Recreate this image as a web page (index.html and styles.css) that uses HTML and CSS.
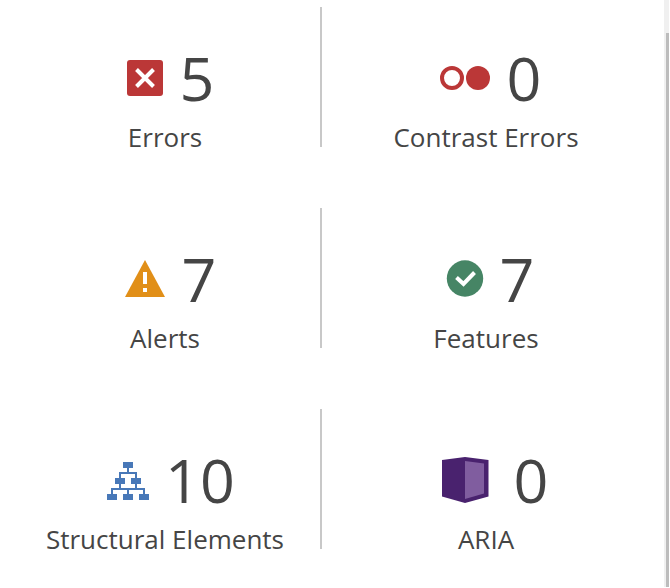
FILE: index.html
```html
<!DOCTYPE html>
<html lang="en">
<head>
<meta charset="utf-8">
<title>Summary</title>
<link rel="stylesheet" href="styles.css">
</head>
<body>
<main class="summary">
  <section class="item">
    <div class="count">
      <svg class="icon" width="60" height="50" viewBox="1 -1 60 50" aria-hidden="true"><rect x="12" y="6" width="36" height="36" rx="3" fill="#bb3737"/><path d="M21.500 15.500L38.500 32.500M38.500 15.500L21.500 32.500" stroke="#fff" stroke-width="4"/></svg>
      <span class="number">5</span>
    </div>
    <h2 class="label">Errors</h2>
  </section>
  <section class="item">
    <div class="count">
      <svg class="icon" width="72" height="50" viewBox="2 -1 72 50" aria-hidden="true"><circle cx="23" cy="24" r="10" fill="#fff" stroke="#bb3737" stroke-width="4"/><circle cx="49" cy="24" r="12" fill="#bb3737"/></svg>
      <span class="number">0</span>
    </div>
    <h2 class="label">Contrast Errors</h2>
  </section>
  <section class="item">
    <div class="count">
      <svg class="icon" width="64" height="50" viewBox="0 0 64 50" aria-hidden="true"><path d="M31 6L51 43H11Z" fill="#e18f18"/><path d="M29 18h4v12h-4zM29 34h4v4h-4z" fill="#fff"/></svg>
      <span class="number">7</span>
    </div>
    <h2 class="label">Alerts</h2>
  </section>
  <section class="item">
    <div class="count">
      <svg class="icon" width="58" height="50" viewBox="1 0 58 50" aria-hidden="true"><circle cx="28" cy="24.500" r="18.200" fill="#468565"/><path d="M19.500 23.500L26.500 30L37.500 18.500" fill="none" stroke="#fff" stroke-width="4"/></svg>
      <span class="number">7</span>
    </div>
    <h2 class="label">Features</h2>
  </section>
  <section class="item">
    <div class="count">
      <svg class="icon" width="66" height="50" viewBox="-2 -1 66 50" aria-hidden="true"><path fill="#4878b8" d="M26 6h10v6h-10zM18 22h10v6h-10zM34 22h10v6h-10zM10 38h10v6h-10zM26 38h10v6h-10zM42 38h10v6h-10z"/><path fill="none" stroke="#4878b8" stroke-width="2" d="M31 12v5M23 22v-5h16v5M23 28v5M39 28v5M15 38v-5h32v5M31 33v5"/></svg>
      <span class="number">10</span>
    </div>
    <h2 class="label">Structural Elements</h2>
  </section>
  <section class="item">
    <div class="count">
      <svg class="icon" width="86" height="50" viewBox="0 -1 86 50" aria-hidden="true"><path d="M18 4L41 1L64.500 4V40.500L41 47L18 40.500Z" fill="#49226e"/><path d="M41 5L60 7.500V37.500L41 43Z" fill="#805d9f"/></svg>
      <span class="number">0</span>
    </div>
    <h2 class="label">ARIA</h2>
  </section>
</main>
<div class="track"><div class="thumb"></div></div>
</body>
</html>
```
FILE: styles.css
```css
* {
  box-sizing: border-box;
}

body {
  display: flex;
  min-height: 100vh;
  margin: 0;
  padding: 0 1px 1px 0;
  background: #fff;
  color: #454545;
  font-family: "Open Sans", sans-serif;
}

.summary {
  flex: 1;
  display: grid;
  grid-template-columns: 39fr 41fr;
  align-content: start;
  row-gap: 61px;
  padding: 7px 14px 0 10px;
}

.item {
  display: flex;
  flex-direction: column;
  align-items: center;
  min-height: 140px;
  padding-top: 39px;
}

.item:nth-child(odd) {
  border-right: 2px solid #c8c8c8;
}

.count {
  display: flex;
  align-items: center;
  gap: 4px;
  height: 64px;
}

.icon {
  display: block;
}

.number {
  font-size: 61px;
  line-height: 64px;
}

.label {
  margin: 9px 0 -8px;
  font-size: 26px;
  font-weight: 400;
  line-height: 36px;
  white-space: nowrap;
}

.track {
  display: flex;
  width: 5px;
  padding: 33px 0 0 2px;
  background: #f0f0f0;
}

.thumb {
  flex: 1;
  background: #bcbcbc;
}
```
